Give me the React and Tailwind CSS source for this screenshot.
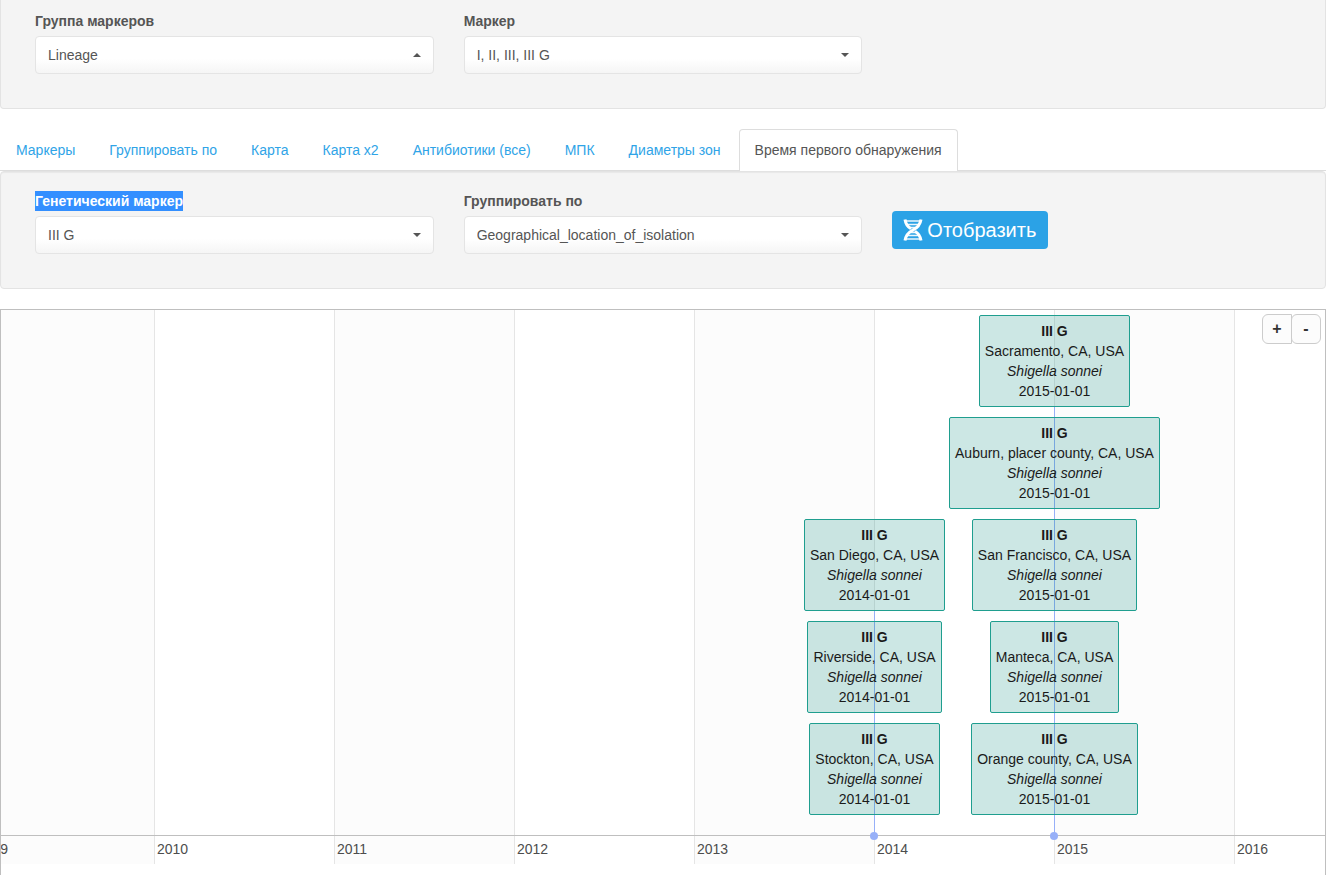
const TABS = [
  'Маркеры',
  'Группировать по',
  'Карта',
  'Карта x2',
  'Антибиотики (все)',
  'МПК',
  'Диаметры зон',
];

const YEARS = [
  { year: '2009', places: [] },
  { year: '2010', places: [] },
  { year: '2011', places: [] },
  { year: '2012', places: [] },
  { year: '2013', places: [] },
  { year: '2014', places: ['San Diego, CA, USA', 'Riverside, CA, USA', 'Stockton, CA, USA'] },
  {
    year: '2015',
    places: [
      'Sacramento, CA, USA',
      'Auburn, placer county, CA, USA',
      'San Francisco, CA, USA',
      'Manteca, CA, USA',
      'Orange county, CA, USA',
    ],
  },
  { year: '2016', places: [] },
];

function SelectField({ id, label, value, up = false, selected = false }) {
  return (
    <div className="min-w-0">
      <label htmlFor={id} className="mb-[5px] block font-bold">
        <span className={selected ? 'inline-block bg-[#338fff] text-white' : 'inline-block'}>{label}</span>
      </label>
      <div className="relative">
        <select
          id={id}
          className="block h-[38px] w-full appearance-none rounded border border-[#e4e4e4] bg-gradient-to-b from-white from-60% to-[#f5f5f5] px-3 text-[14px] leading-5 text-[#555]"
        >
          <option>{value}</option>
        </select>
        <svg
          className="pointer-events-none absolute top-[17px] right-[13px]"
          width="8"
          height="4"
          viewBox="0 0 8 4"
          fill="#555"
          aria-hidden="true"
        >
          <path d={up ? 'M0 4L4 0L8 4Z' : 'M0 0H8L4 4Z'} />
        </svg>
      </div>
    </div>
  );
}

function DnaIcon() {
  return (
    <svg width="20" height="22" viewBox="0 0 20 22" fill="none" stroke="white" aria-hidden="true">
      <path d="M2 2H18M4 5.5H16M6 8.6H14M6 13.4H14M4 16.5H16M2 20H18" strokeWidth="1.7" strokeOpacity="0.9" />
      <path d="M2 0.5C2.6 4.5 4.2 7.6 8 9.8M12 12.2C15.8 14.4 17.4 17.5 18 21.5" strokeWidth="3" />
      <path d="M18 0.5C17.2 5.8 14.6 8.7 10 11C5.4 13.3 2.8 16.2 2 21.5" strokeWidth="3" />
    </svg>
  );
}

function Item({ place, year }) {
  return (
    <div className="rounded-[2px] border border-[#1f9e8f] bg-[#00897833] p-[5px] text-center whitespace-nowrap text-[#1a1a1a]">
      <b className="block">III G</b>
      <span className="block">{place}</span>
      <i className="block">Shigella sonnei</i>
      <span className="block">{year}-01-01</span>
    </div>
  );
}

function YearColumn({ year, places }) {
  const odd = Number(year) % 2 === 1;
  const last = year === '2016';
  return (
    <div
      className={`relative flex flex-col border-l border-[#e5e5e5] ${odd ? 'bg-[#fcfcfc]' : ''} ${last ? 'flex-1' : 'w-[180px] shrink-0'}`}
    >
      <div className="h-[526px]" />
      <div className="h-7 pt-[3px] pl-[2px] text-[#4d4d4d]">{year}</div>
      {places.length > 0 && (
        <>
          <div
            className={`absolute bottom-[28px] -left-px w-px bg-[#97b0f8] ${places.length === 5 ? 'top-[97px]' : 'top-[301px]'}`}
          />
          <div className="absolute bottom-[49px] -left-[121px] z-10 flex w-[241px] flex-col items-center gap-[10px]">
            {places.map((place) => (
              <Item key={place} place={place} year={year} />
            ))}
          </div>
          <div className="absolute bottom-[24px] -left-[5px] z-10 size-2 rounded-full bg-[#97b0f8]" />
        </>
      )}
    </div>
  );
}

export default function App() {
  return (
    <div className="flex min-h-screen flex-col bg-white font-['Liberation_Sans',Arial,sans-serif] text-[14px] leading-5 text-[#555]">
      <section className="rounded-b border border-t-0 border-[#e3e3e3] bg-[#f4f4f4] px-[34px] pt-[11px] pb-[34px]">
        <div className="grid grid-cols-3 gap-[30px]">
          <SelectField id="marker-group" label="Группа маркеров" value="Lineage" up />
          <SelectField id="marker" label="Маркер" value="I, II, III, III G" />
        </div>
      </section>

      <nav className="mt-5 flex gap-[2px] border-b border-[#ddd]">
        {TABS.map((tab) => (
          <a
            key={tab}
            href="#"
            className="border border-b-0 border-transparent px-[15px] py-[10px] whitespace-nowrap text-[#2fa4e7]"
          >
            {tab}
          </a>
        ))}
        <a
          href="#"
          className="-mb-px rounded-t border border-b-0 border-[#ddd] bg-white px-[15px] pt-[10px] pb-[11px] whitespace-nowrap text-[#555]"
          aria-current="page"
        >
          Время первого обнаружения
        </a>
      </nav>

      <section className="rounded border border-[#e3e3e3] bg-[#f4f4f4] px-[34px] pt-[19px] pb-[34px] shadow-[inset_0_1px_1px_rgba(0,0,0,0.05)]">
        <div className="grid grid-cols-3 gap-[30px]">
          <SelectField id="genetic-marker" label="Генетический маркер" value="III G" selected />
          <SelectField id="group-by" label="Группировать по" value="Geographical_location_of_isolation" />
          <div>
            <button
              type="button"
              className="mt-5 flex h-[38px] items-center gap-1 rounded bg-[#2ba2e6] pr-3 pl-[11px] text-[20px] leading-6 text-white"
            >
              <DnaIcon />
              Отобразить
            </button>
          </div>
        </div>
      </section>

      <section className="relative mt-5 flex-1 overflow-hidden border border-b-0 border-[#bfbfbf] pb-[11px]">
        <div className="relative -ml-[27px] flex">
          {YEARS.map((column) => (
            <YearColumn key={column.year} {...column} />
          ))}
          <div className="absolute bottom-[28px] left-0 h-px w-full bg-[#bfbfbf]" />
        </div>
        <div className="absolute top-1 right-1 z-20 flex">
          <button
            type="button"
            className="h-[30px] w-[30px] rounded-l-md border border-[#ccc] bg-[#fcfcfc] text-[16px] font-bold text-[#333]"
          >
            +
          </button>
          <button
            type="button"
            className="-ml-px h-[30px] w-[30px] rounded-md border border-[#ccc] bg-[#fcfcfc] text-[16px] font-bold text-[#333]"
          >
            -
          </button>
        </div>
      </section>
    </div>
  );
}
